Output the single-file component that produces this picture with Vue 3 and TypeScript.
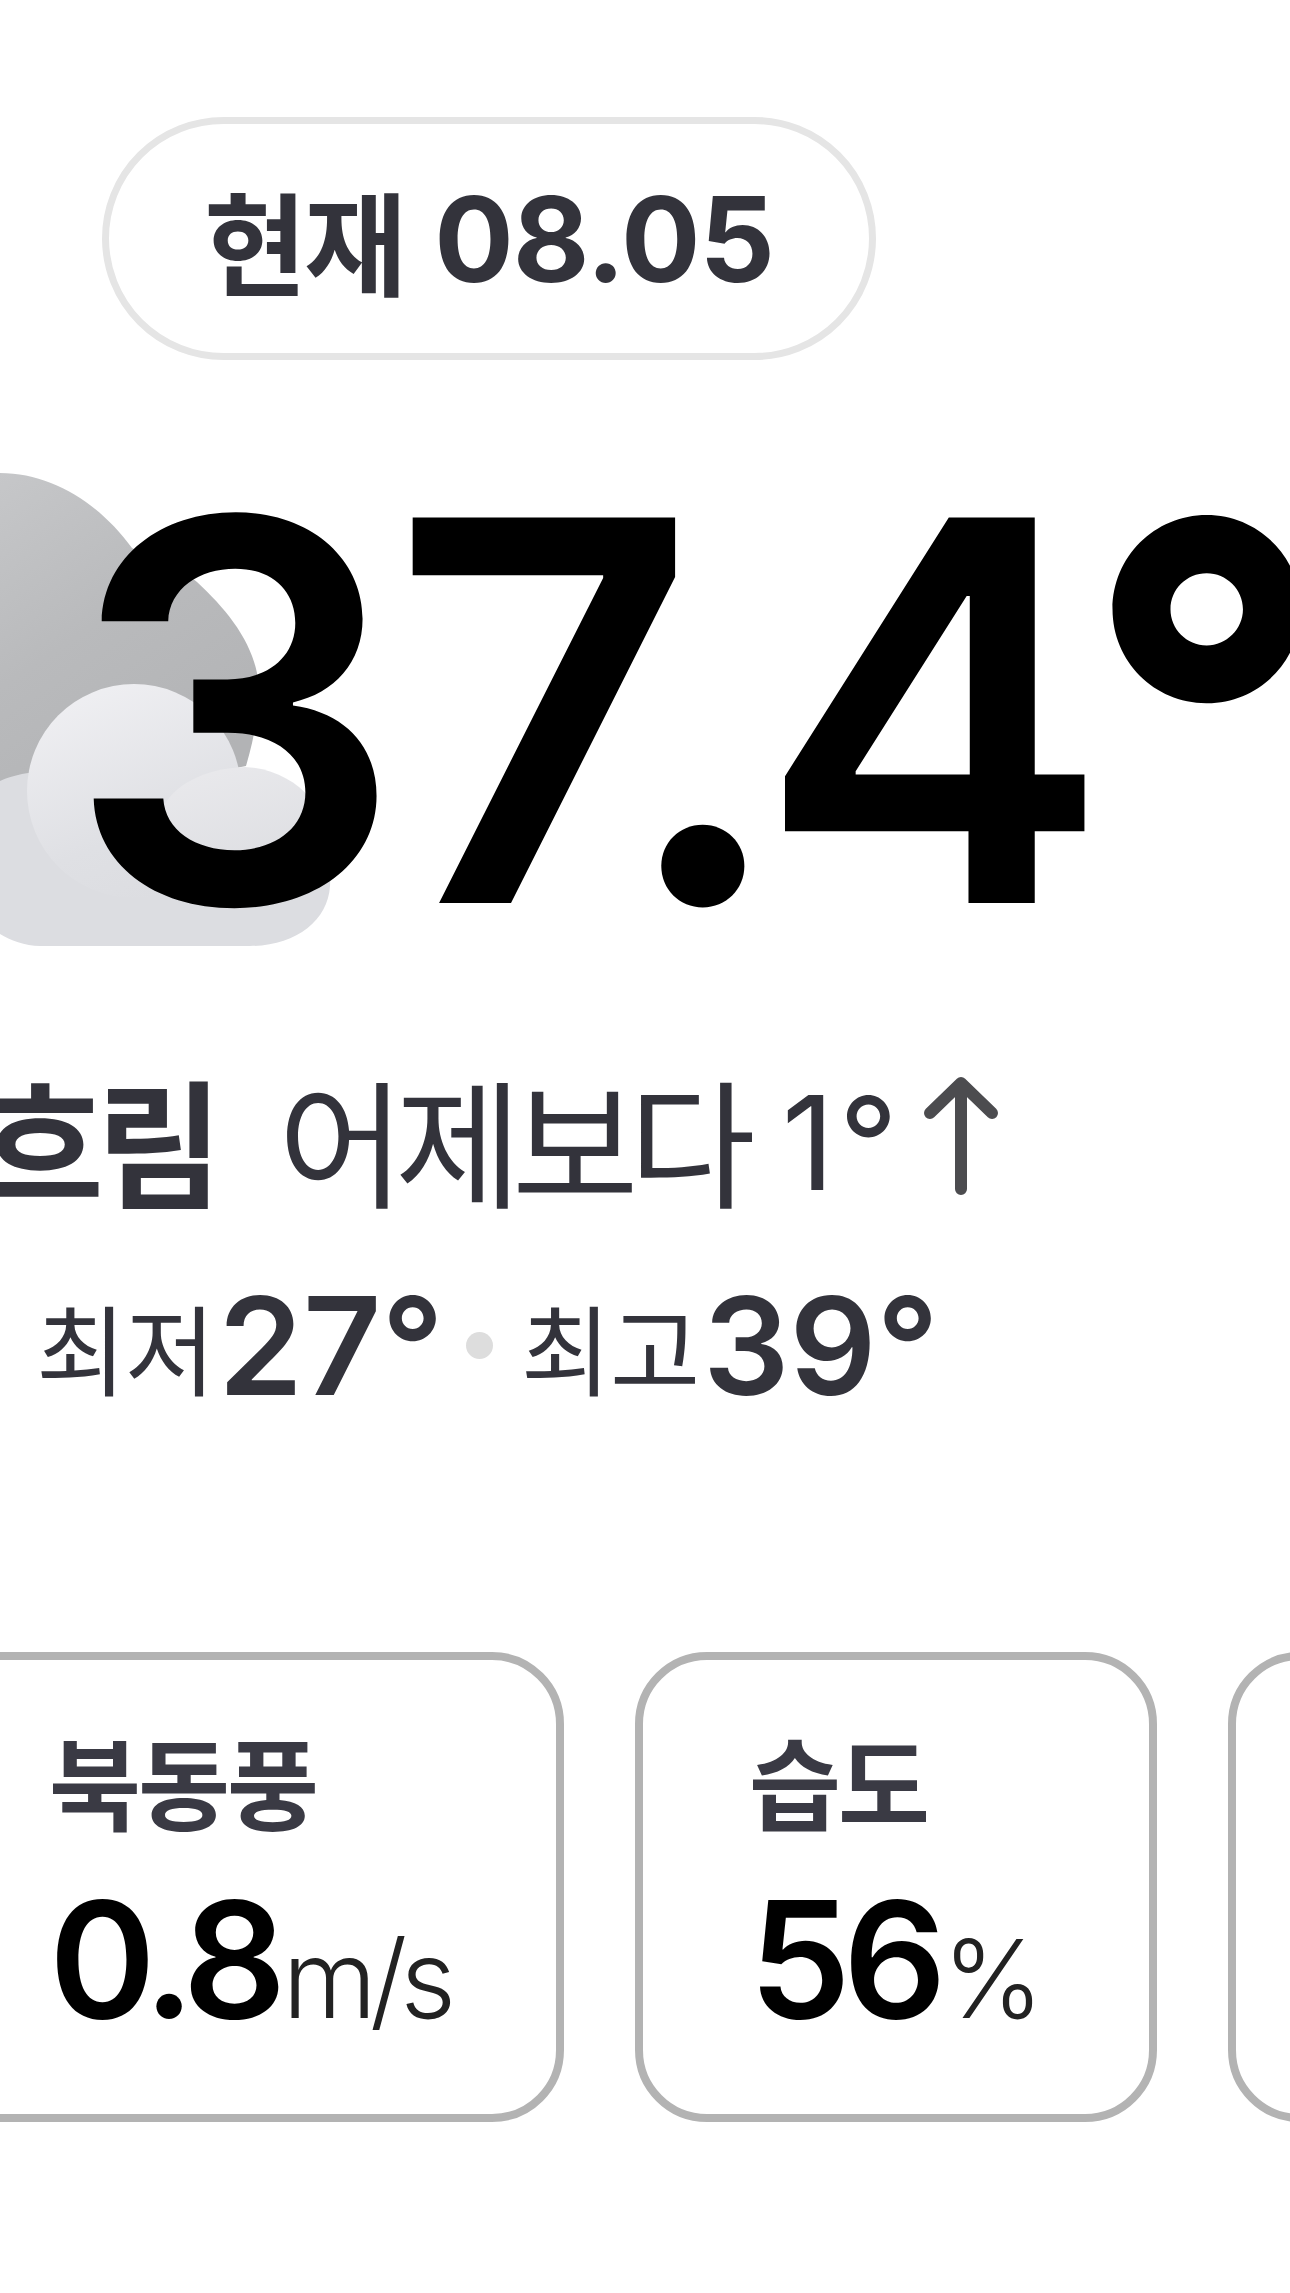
<template>
  <main class="page">
    <div class="pill"><span class="pill-ko">현재</span><span class="pill-num">08.05</span></div>

    <section class="hero">
      <svg class="cloud" width="340" height="480" viewBox="0 0 340 480" aria-hidden="true">
        <defs>
          <linearGradient id="backTop" x1="0" y1="0" x2="0.5" y2="1">
            <stop offset="0" stop-color="#c6c7c9" />
            <stop offset="0.5" stop-color="#b9babc" />
            <stop offset="1" stop-color="#b2b3b5" />
          </linearGradient>
          <linearGradient id="mid" x1="0.2" y1="0" x2="0.6" y2="1">
            <stop offset="0" stop-color="#f0f0f3" />
            <stop offset="0.7" stop-color="#dfe0e4" />
            <stop offset="1" stop-color="#dcdde1" />
          </linearGradient>
          <linearGradient id="small" x1="0.2" y1="0" x2="0.6" y2="1">
            <stop offset="0" stop-color="#e9e9ec" />
            <stop offset="1" stop-color="#dcdde1" />
          </linearGradient>
        </defs>
        <path d="M0 -3 C52 -3 100 28 132 72 C150 82 175 87 197 106 C225 132 250 162 257 197 C260 237 254 262 246 290 L0 340 Z" fill="url(#backTop)" />
        <path d="M0 305 C18 297 40 294 70 297 L245 305 L330 410 C328 445 295 470 250 470 L40 470 C25 470 10 464 0 458 Z" fill="#dcdde1" />
        <circle cx="134" cy="315" r="107" fill="url(#mid)" />
        <path d="M163 332 C172 310 205 292 245 291 C272 292 296 305 310 322 C324 345 332 375 330 410 L163 410 Z" fill="url(#small)" />
      </svg>
      <div class="temp"><span class="temp-main">37.</span><span class="temp-four">4</span><span class="temp-deg">°</span></div>
    </section>

    <p class="summary">
      <strong>흐림</strong>
      <span class="compare">어제보다</span>
      <span class="delta">1°</span>
      <svg class="arrow" width="74" height="124" viewBox="0 0 74 124" aria-hidden="true">
        <path d="M37 116 V12 M6 40 L37 10 L68 40" fill="none" stroke="#4c4c4f" stroke-width="12" stroke-linecap="round" stroke-linejoin="round" />
      </svg>
    </p>

    <p class="range">
      <span class="label">최저</span><b>27°</b>
      <i class="dot"></i>
      <span class="label">최고</span><b>39°</b>
    </p>

    <section class="cards">
      <article v-for="card in cards" :key="card.kind" class="card" :class="card.kind">
        <h3>{{ card.label }}</h3>
        <p><b>{{ card.value }}</b><small>{{ card.unit }}</small></p>
      </article>
    </section>
  </main>
</template>

<script setup lang="ts">
interface Card {
  kind: string;
  label: string;
  value: string;
  unit: string;
}

const cards: Card[] = [
  { kind: "wind", label: "북동풍", value: "0.8", unit: "m/s" },
  { kind: "humidity", label: "습도", value: "56", unit: "%" },
  { kind: "rest", label: "", value: "", unit: "" },
];
</script>

<style>
html,
body {
  margin: 0;
  background: #fff;
}
</style>

<style scoped>
.page {
  width: 1290px;
  height: 2293px;
  overflow: hidden;
  background: #fff;
  font-family: Inter, "Noto Sans CJK KR", sans-serif;
  padding-top: 117px;
  box-sizing: border-box;
}
.pill {
  box-sizing: border-box;
  width: 774px;
  height: 243px;
  margin-left: 102px;
  display: flex;
  align-items: center;
  justify-content: center;
  gap: 30px;
  border: 7px solid #e5e5e5;
  border-radius: 122px;
  color: #33333b;
  white-space: nowrap;
}
.pill-ko {
  font-size: 112px;
  font-weight: 600;
  letter-spacing: -3px;
}
.pill-num {
  font-size: 118px;
  font-weight: 700;
  letter-spacing: -1px;
}
.hero {
  position: relative;
  height: 470px;
  margin-top: 116px;
}
.cloud {
  position: absolute;
  left: 0;
  top: 0;
  overflow: visible;
}
.temp {
  position: relative;
  margin-left: 66px;
  font-size: 530px;
  line-height: 470px;
  font-weight: 600;
  letter-spacing: -12px;
  color: #000;
  white-space: nowrap;
}
.temp-four {
  margin-left: -18px;
  letter-spacing: -26px;
}
.temp-deg {
  font-weight: 800;
}
.summary {
  display: flex;
  align-items: center;
  margin: 128px 0 0 -23px;
  height: 125px;
  color: #33333b;
  font-size: 138px;
  white-space: nowrap;
}
.summary strong {
  font-weight: 700;
  letter-spacing: -8px;
}
.compare {
  margin-left: 63px;
  font-weight: 400;
  letter-spacing: -10px;
}
.delta {
  margin-left: 36px;
  margin-top: 12px;
  font-size: 130px;
  font-weight: 400;
  letter-spacing: 4px;
}
.arrow {
  margin-left: 22px;
  margin-top: -4px;
}
.range {
  display: flex;
  align-items: center;
  margin: 86px 0 0 36px;
  height: 120px;
  color: #33333b;
  white-space: nowrap;
}
.label {
  font-size: 98px;
  font-weight: 400;
  letter-spacing: -1px;
}
.range b {
  margin-left: 4px;
  font-size: 136px;
  font-weight: 600;
  letter-spacing: 0;
}
.dot {
  width: 27px;
  height: 27px;
  margin: 0 28px 0 22px;
  border-radius: 50%;
  background: #dddddd;
}
.cards {
  display: flex;
  gap: 71px;
  margin: 247px 0 0 -100px;
}
.card {
  flex: none;
  box-sizing: border-box;
  width: 522px;
  height: 470px;
  border: 8px solid #b3b3b3;
  border-radius: 72px;
  padding: 67px 0 0 106px;
}
.card.wind {
  width: 664px;
  padding-left: 141px;
}
.card h3 {
  margin: 0;
  height: 120px;
  font-size: 100px;
  line-height: 120px;
  font-weight: 600;
  letter-spacing: -3px;
  color: #3a3a44;
}
.card p {
  margin: 14px 0 0;
  color: #000;
  white-space: nowrap;
}
.card b {
  font-size: 162px;
  font-weight: 600;
  letter-spacing: -8px;
}
.card small {
  margin-left: 4px;
  font-size: 108px;
  font-weight: 300;
  letter-spacing: -7px;
  color: #222;
}
</style>
